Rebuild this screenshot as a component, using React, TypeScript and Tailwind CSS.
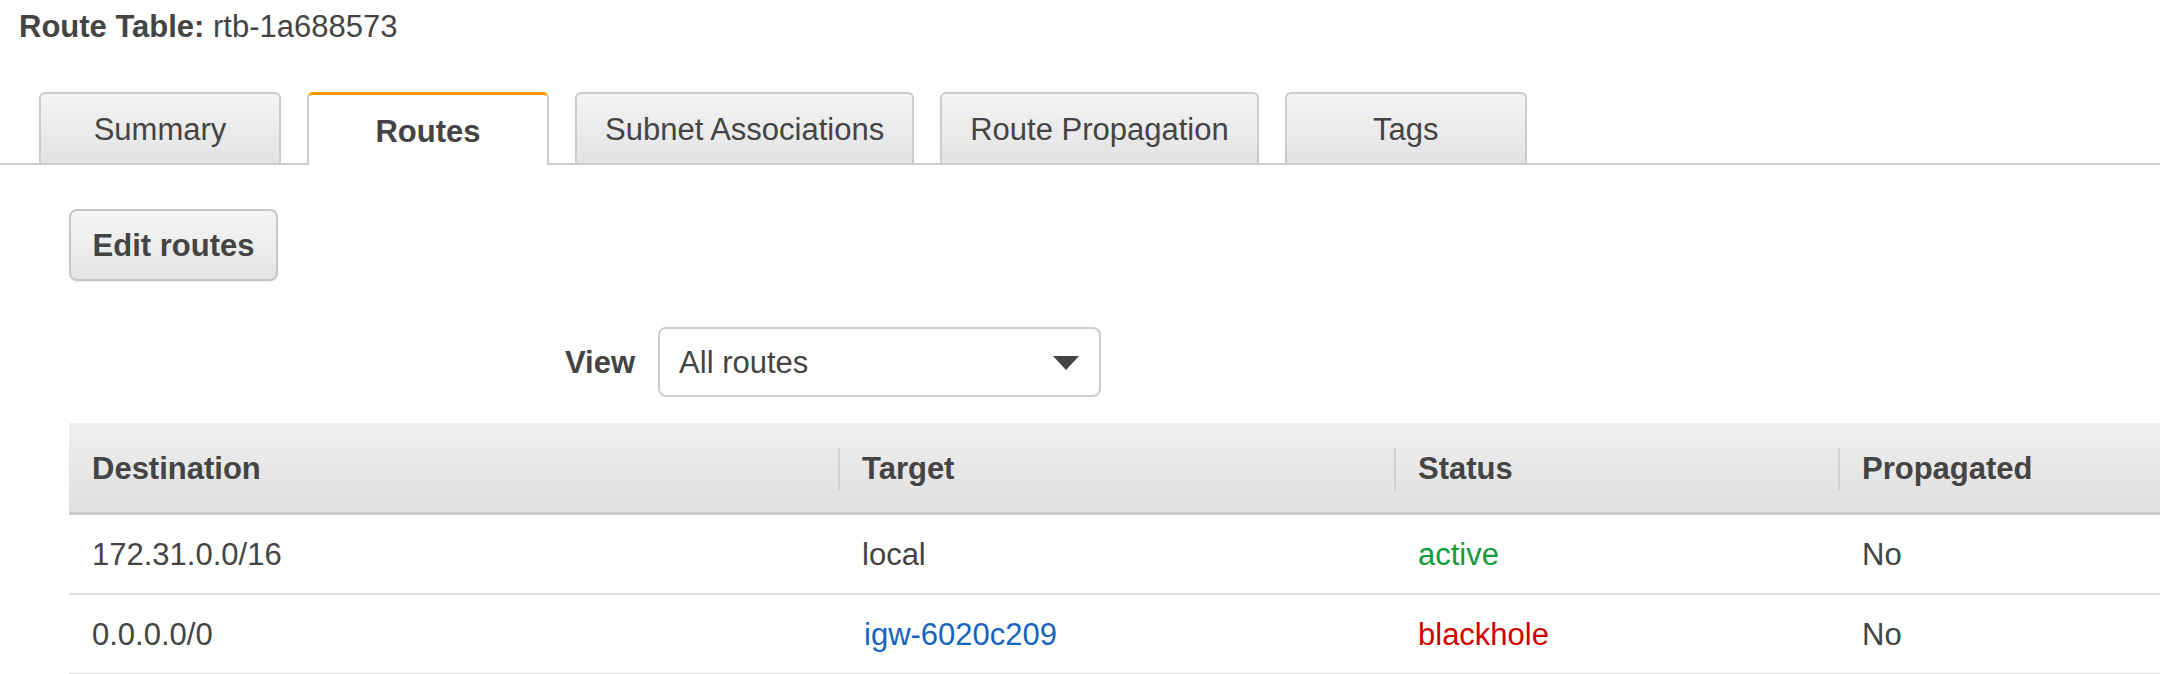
import { useState } from 'react'

type Route = {
  destination: string
  target: string
  targetLink?: boolean
  status: 'active' | 'blackhole'
  propagated: string
}

const tabs = ['Summary', 'Routes', 'Subnet Associations', 'Route Propagation', 'Tags']

const routes: Route[] = [
  { destination: '172.31.0.0/16', target: 'local', status: 'active', propagated: 'No' },
  { destination: '0.0.0.0/0', target: 'igw-6020c209', targetLink: true, status: 'blackhole', propagated: 'No' },
]

const cols = 'grid grid-cols-[769px_556px_444px_1fr]'

function Tabs({ active, onSelect }: { active: string; onSelect: (t: string) => void }) {
  return (
    <div className="flex items-end gap-[26px] pl-[39px] border-b-2 border-[#cccccc] h-[73px]">
      {tabs.map((t) =>
        t === active ? (
          <button
            key={t}
            onClick={() => onSelect(t)}
            className="relative -mb-[2px] h-[73px] min-w-[242px] px-[28px] pt-[3px] bg-white border-x-2 border-t-[3px] border-x-[#cccccc] border-t-[#ff9900] rounded-t-[6px] font-bold text-[#444444]"
          >
            {t}
          </button>
        ) : (
          <button
            key={t}
            onClick={() => onSelect(t)}
            className="h-[71px] min-w-[242px] px-[28px] pt-[2px] bg-gradient-to-b from-[#f4f4f4] to-[#e3e3e3] border-2 border-b-0 border-[#cccccc] rounded-t-[6px] text-[#444444]"
          >
            {t}
          </button>
        )
      )}
    </div>
  )
}

export default function App() {
  const [active, setActive] = useState('Routes')

  return (
    <div className="bg-white min-h-screen text-[31px] leading-none text-[#444444] font-['Liberation_Sans',Arial,sans-serif] overflow-hidden">
      <h1 className="pl-[19px] pt-[11px] h-[92px] leading-[31px]">
        <span className="font-bold">Route Table:</span> rtb-1a688573
      </h1>

      <Tabs active={active} onSelect={setActive} />

      <div className="pl-[69px] pt-[44px]">
        <button className="h-[72px] w-[209px] rounded-[8px] border-2 border-[#c6c6c6] bg-gradient-to-b from-[#f6f6f6] to-[#e4e4e4] shadow-[0_1px_1px_rgba(0,0,0,0.08)] font-bold text-[#444444]">
          Edit routes
        </button>
      </div>

      <div className="flex items-center pl-[565px] pt-[46px]">
        <span className="font-bold mr-[23px]">View</span>
        <div className="flex items-center justify-between h-[70px] w-[443px] rounded-[8px] border-2 border-[#cccccc] bg-white pl-[19px] pr-[20px]">
          <span>All routes</span>
          <svg width="26" height="14" viewBox="0 0 26 14" className="mt-[2px]">
            <path d="M0 0 H26 L13 14 Z" fill="#444444" />
          </svg>
        </div>
      </div>

      <div className="ml-[69px] mt-[26px]">
        <div className={`${cols} h-[92px] bg-gradient-to-b from-[#efefef] to-[#e0e0e0] border-b-[3px] border-[#cccccc] font-bold`}>
          {['Destination', 'Target', 'Status', 'Propagated'].map((h, i) => (
            <div key={h} className="flex items-center pt-[2px]">
              {i > 0 && <div className="w-[2px] h-[42px] bg-[#d2d2d2] mr-[22px]" />}
              <span className={i === 0 ? 'pl-[23px]' : ''}>{h}</span>
            </div>
          ))}
        </div>
        {routes.map((r) => (
          <div key={r.destination} className={`${cols} h-[80px] border-b-2 border-[#dddddd] items-center`}>
            <span className="pl-[23px]">{r.destination}</span>
            <span className={r.targetLink ? 'pl-[26px] text-[#1565c0]' : 'pl-[24px]'}>{r.target}</span>
            <span className={`pl-[24px] ${r.status === 'active' ? 'text-[#129c3a]' : 'text-[#d10000]'}`}>{r.status}</span>
            <span className="pl-[24px]">{r.propagated}</span>
          </div>
        ))}
      </div>
    </div>
  )
}
